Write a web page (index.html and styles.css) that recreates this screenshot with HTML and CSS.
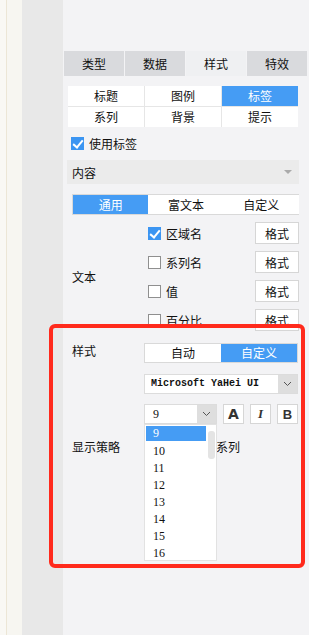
FILE: index.html
```html
<!DOCTYPE html>
<html lang="zh-CN">
<head>
    <meta charset="UTF-8">
    <meta name="viewport" content="width=device-width, initial-scale=1.0">
    <title>标签样式</title>
    <link rel="stylesheet" href="styles.css">
</head>
<body>
<div class="app">
    <div class="rail rail-a"></div>
    <div class="rail rail-b"></div>
    <div class="rail rail-c"></div>

    <div class="panel">
        <div class="tabs">
            <div class="tab">类型</div>
            <div class="tab">数据</div>
            <div class="tab active">样式</div>
            <div class="tab">特效</div>
        </div>

        <div class="subtabs">
            <div class="subtab">标题</div>
            <div class="subtab">图例</div>
            <div class="subtab active">标签</div>
            <div class="subtab">系列</div>
            <div class="subtab">背景</div>
            <div class="subtab">提示</div>
        </div>

        <div class="check-row">
            <span class="cb on"></span>使用标签
        </div>

        <div class="dropdown">
            <span>内容</span>
            <span class="tri"></span>
        </div>

        <div class="seg seg-content">
            <div class="seg-item active">通用</div>
            <div class="seg-item">富文本</div>
            <div class="seg-item">自定义</div>
        </div>

        <div class="field field-text">
            <div class="field-label">文本</div>
            <div class="field-body">
                <div class="opt-row">
                    <span class="opt"><span class="cb on"></span>区域名</span>
                    <button class="btn">格式</button>
                </div>
                <div class="opt-row">
                    <span class="opt"><span class="cb"></span>系列名</span>
                    <button class="btn">格式</button>
                </div>
                <div class="opt-row">
                    <span class="opt"><span class="cb"></span>值</span>
                    <button class="btn">格式</button>
                </div>
                <div class="opt-row">
                    <span class="opt"><span class="cb"></span>百分比</span>
                    <button class="btn">格式</button>
                </div>
            </div>
        </div>

        <div class="field field-style">
            <div class="field-label">样式</div>
            <div class="field-body narrow">
                <div class="seg seg-style">
                    <div class="seg-item">自动</div>
                    <div class="seg-item active">自定义</div>
                </div>

                <div class="select font-select">
                    <span class="select-value mono">Microsoft YaHei UI</span>
                    <span class="select-arrow">
                        <svg width="9" height="6" viewBox="0 0 9 6"><polyline points="1,1 4.5,4.5 8,1" fill="none" stroke="#555" stroke-width="1"/></svg>
                    </span>
                </div>

                <div class="size-row">
                    <div class="select size-select">
                        <span class="select-value num">9</span>
                        <span class="select-arrow">
                            <svg width="9" height="6" viewBox="0 0 9 6"><polyline points="1,1 4.5,4.5 8,1" fill="none" stroke="#555" stroke-width="1"/></svg>
                        </span>

                        <div class="size-list">
                            <div class="size-item active">9</div>
                            <div class="size-item">10</div>
                            <div class="size-item">11</div>
                            <div class="size-item">12</div>
                            <div class="size-item">13</div>
                            <div class="size-item">14</div>
                            <div class="size-item">15</div>
                            <div class="size-item">16</div>
                            <div class="size-scroll"></div>
                        </div>
                    </div>
                    <button class="btn fmt fmt-a">A</button>
                    <button class="btn fmt fmt-i">I</button>
                    <button class="btn fmt fmt-b">B</button>
                </div>
            </div>
        </div>

        <div class="field field-show">
            <div class="field-label">显示策略</div>
            <div class="field-body narrow">
                <span class="show-value">系列</span>
            </div>
        </div>
    </div>

    <div class="highlight"></div>
</div>
</body>
</html>
```

FILE: styles.css
```css
* {
    box-sizing: border-box;
}

body {
    margin: 0;
    font-family: "Noto Sans CJK SC", "Noto Sans", sans-serif;
    font-size: 12px;
    color: #111;
    background-color: #f3f3f5;
}

.app {
    position: relative;
    display: flex;
    height: 635px;
    overflow: hidden;
}

.rail-a {
    width: 7px;
    background-color: #f9f8f4;
    border-right: 1px solid #ece6d6;
}

.rail-b {
    width: 15px;
    background-color: #f7f6f1;
}

.rail-c {
    width: 41px;
    background-color: #e8e8e8;
}

.panel {
    flex: 1;
    padding-top: 51px;
    background-color: #f3f3f5;
}

/* top tabs */
.tabs {
    display: flex;
    gap: 1px;
    margin-left: 1px;
    width: 243px;
}

.tab {
    width: 60px;
    height: 25px;
    line-height: 25px;
    text-align: center;
    background-color: #d9dadd;
}

.tab.active {
    background-color: #eff0f2;
}

/* second level tabs */
.subtabs {
    display: grid;
    grid-template-columns: repeat(3, 1fr);
    gap: 1px;
    width: 230px;
    margin: 10px 0 0 5px;
    background-color: #e6e6e6;
}

.subtab {
    height: 20px;
    line-height: 20px;
    text-align: center;
    background-color: #fff;
}

.subtab.active {
    background-color: #459cf4;
    color: #fff;
}

/* checkboxes */
.cb {
    display: inline-block;
    width: 13px;
    height: 13px;
    margin-right: 5px;
    background-color: #fff;
    border: 1px solid #8f8f8f;
    vertical-align: middle;
    position: relative;
}

.cb.on {
    background-color: #3b95f2;
    border-color: #3b95f2;
}

.cb.on::after {
    content: "";
    position: absolute;
    left: 3px;
    top: 0px;
    width: 4px;
    height: 8px;
    border-right: 2px solid #fff;
    border-bottom: 2px solid #fff;
    transform: rotate(40deg);
}

.check-row {
    display: flex;
    align-items: center;
    height: 18px;
    margin: 7px 0 0 8px;
}

/* content dropdown */
.dropdown {
    display: flex;
    align-items: center;
    justify-content: space-between;
    width: 232px;
    height: 24px;
    margin: 8px 0 0 4px;
    padding: 0 7px 0 5px;
    background-color: #ebebeb;
}

.tri {
    width: 0;
    height: 0;
    border-left: 4px solid transparent;
    border-right: 4px solid transparent;
    border-top: 4px solid #aaa;
}

/* segmented buttons */
.seg {
    display: flex;
    border: 1px solid #d9d9d9;
    background-color: #fff;
}

.seg-item {
    flex: 1;
    text-align: center;
}

.seg-item.active {
    background-color: #459cf4;
    color: #fff;
}

.seg-content {
    width: 227px;
    height: 21px;
    line-height: 19px;
    margin: 10px 0 0 9px;
    border-right: none;
}

.seg-style {
    width: 154px;
    height: 20px;
    line-height: 18px;
}

/* fields */
.field {
    display: flex;
    padding-left: 9px;
}

.field-label {
    width: 76px;
}

.field-text {
    align-items: center;
    margin-top: 7px;
}

.field-body {
    display: flex;
    flex-direction: column;
    gap: 7px;
    width: 151px;
}

.field-body.narrow {
    gap: 0;
    margin-left: -4px;
    width: 155px;
}

.opt-row {
    display: flex;
    align-items: center;
    justify-content: space-between;
    height: 22px;
}

.opt {
    display: flex;
    align-items: center;
}

.btn {
    height: 22px;
    width: 44px;
    padding: 0;
    font: inherit;
    color: #111;
    background-color: #fff;
    border: 1px solid #d6d6d6;
    border-radius: 0;
}

.field-style {
    margin-top: 12px;
}

.field-style .field-label {
    line-height: 16px;
}

/* selects */
.select {
    position: relative;
    display: flex;
    height: 20px;
    background-color: #fff;
    border: 1px solid #dcdcdc;
}

.select-value {
    flex: 1;
    line-height: 18px;
    padding-left: 6px;
}

.select-arrow {
    display: flex;
    align-items: center;
    justify-content: center;
    width: 19px;
    background-color: #dedede;
}

.mono {
    font-family: "Liberation Mono", monospace;
    font-size: 10px;
    font-weight: bold;
}

.num {
    font-family: "Liberation Serif", serif;
    font-size: 12px;
}

.font-select {
    width: 154px;
    margin-top: 11px;
}

.size-row {
    display: flex;
    gap: 5px;
    margin-top: 10px;
}

.size-select {
    width: 73px;
}

.size-select .select-value {
    padding-left: 8px;
}

.fmt {
    width: 21px;
    height: 20px;
    margin-left: 1px;
}

.fmt-a {
    font-family: "DejaVu Sans", sans-serif;
    font-weight: 900;
    font-size: 14px;
    color: #333;
}

.fmt-i {
    font-family: "Liberation Serif", serif;
    font-style: italic;
    font-weight: bold;
    font-size: 13px;
    color: #333;
}

.fmt-b {
    font-family: "Liberation Sans", sans-serif;
    font-weight: bold;
    font-size: 13px;
    color: #333;
}

/* open size list */
.size-list {
    position: absolute;
    top: 19px;
    left: -1px;
    width: 73px;
    height: 137px;
    padding: 1px 10px 0 1px;
    background-color: #fff;
    border: 1px solid #e2e2e2;
    z-index: 2;
}

.size-item {
    height: 17px;
    line-height: 17px;
    padding-left: 7px;
    font-family: "Liberation Serif", serif;
    font-size: 12px;
}

.size-item.active {
    height: 15px;
    line-height: 15px;
    margin-bottom: 2px;
    background-color: #459cf4;
    color: #fff;
}

.size-scroll {
    position: absolute;
    top: 6px;
    right: 1px;
    width: 7px;
    height: 28px;
    border-radius: 3px;
    background-color: #e4e4e4;
}

.field-show {
    margin-top: 13px;
    align-items: center;
    height: 18px;
}

.show-value {
    padding-left: 72px;
}

/* annotation */
.highlight {
    position: absolute;
    left: 49px;
    top: 324px;
    width: 256px;
    height: 244px;
    border: 4px solid #ff2a1c;
    border-radius: 6px;
}
```
